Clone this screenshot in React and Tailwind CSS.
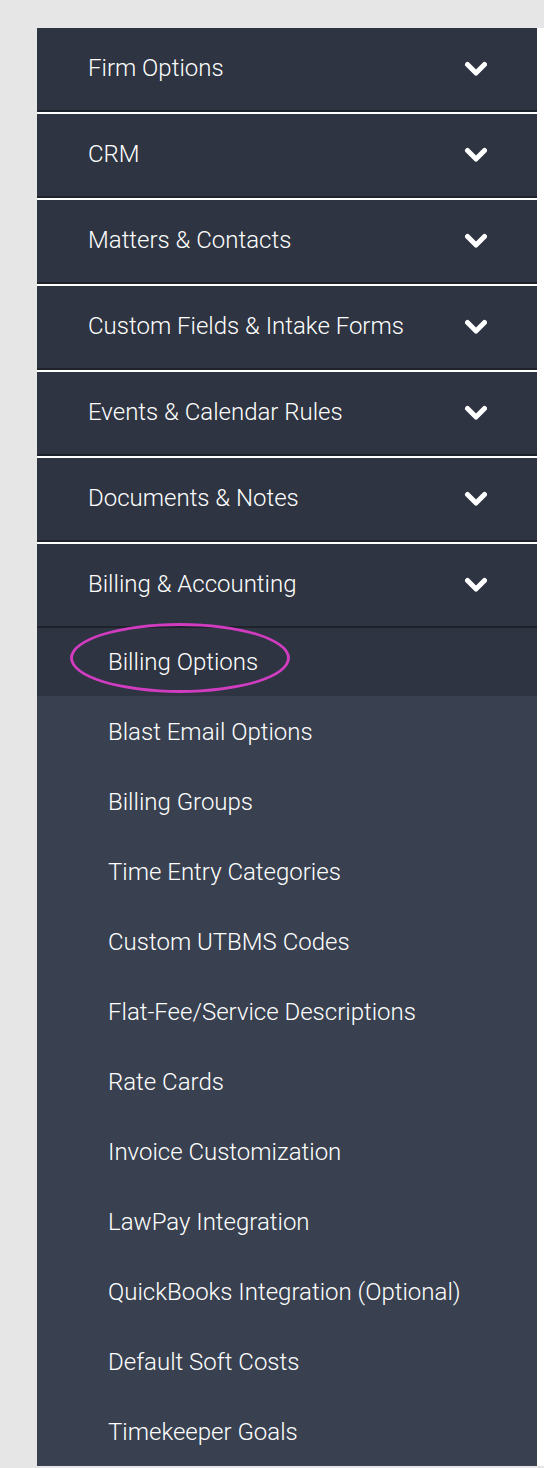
import React from 'react';

const Chevron = () => (
  <svg width="24" height="18" viewBox="0 0 24 18" className="shrink-0">
    <path d="M4.5 4.5 L13 13 L21.5 4.5" fill="none" stroke="#ffffff" strokeWidth="5" strokeLinecap="round" strokeLinejoin="round" />
  </svg>
);

const sections = [
  'Firm Options',
  'CRM',
  'Matters & Contacts',
  'Custom Fields & Intake Forms',
  'Events & Calendar Rules',
  'Documents & Notes',
];

const billingItems = [
  'Blast Email Options',
  'Billing Groups',
  'Time Entry Categories',
  'Custom UTBMS Codes',
  'Flat-Fee/Service Descriptions',
  'Rate Cards',
  'Invoice Customization',
  'LawPay Integration',
  'QuickBooks Integration (Optional)',
  'Default Soft Costs',
  'Timekeeper Goals',
];

const Header = ({ label, gap }) => (
  <div className={`h-[84px] bg-[#2e3441] border-b-2 border-[#1e222a] flex items-center justify-between pl-[51px] pr-[50px] ${gap ? 'mb-[2px]' : ''}`}>
    <span className="text-[24px] font-light leading-none text-white mt-[-2px]">{label}</span>
    <Chevron />
  </div>
);

export default function App() {
  return (
    <div className="min-h-[1468px] bg-[#e6e6e6] pt-[28px] pl-[37px] overflow-hidden" style={{ fontFamily: 'Roboto, "Liberation Sans", sans-serif' }}>
      <div className="w-[507px] bg-white">
        <div className="w-[500px] flex flex-col">
          {sections.map((s) => (
            <Header key={s} label={s} gap />
          ))}
          <Header label="Billing & Accounting" />

          {/* Submenu */}
          <div className="bg-[#394150]">
            <div className="relative h-[68px] bg-[#2e3441] flex items-center pl-[71px]">
              <span className="text-[24px] font-light leading-none text-white">Billing Options</span>
              <div className="absolute left-[33px] top-[-5px] w-[220px] h-[70px] rounded-[50%] border-[3px] border-[#d23cc0]" />
            </div>
            {billingItems.map((item) => (
              <div key={item} className="h-[70px] flex items-center pl-[71px]">
                <span className="text-[24px] font-light leading-none text-white mt-[2px]">{item}</span>
              </div>
            ))}
          </div>
        </div>
      </div>
    </div>
  );
}
